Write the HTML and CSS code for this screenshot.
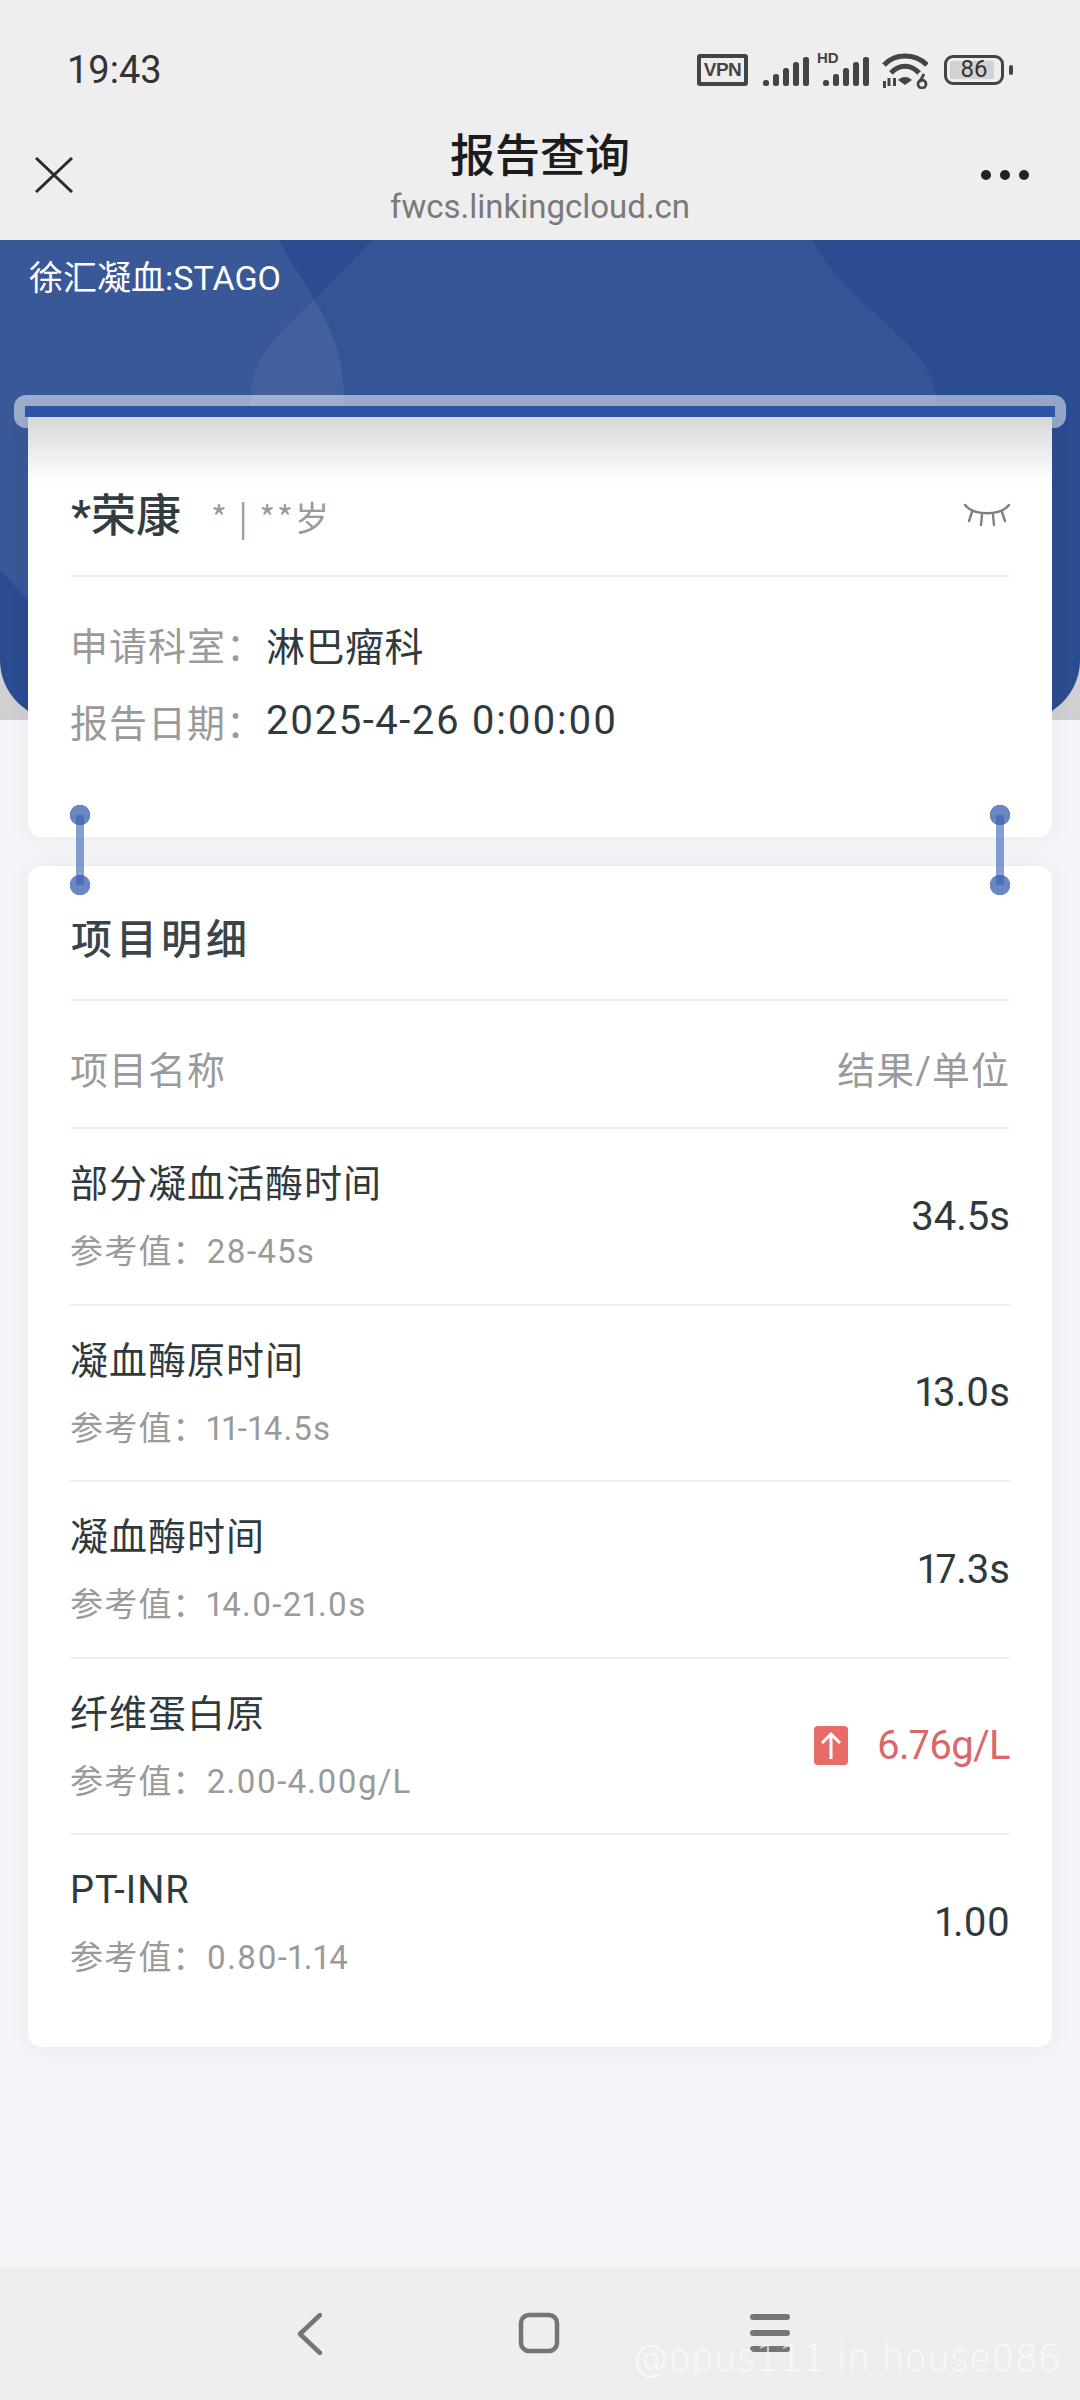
FILE: index.html
```html
<!DOCTYPE html>
<html lang="zh">
<head>
<meta charset="utf-8">
<title>报告查询</title>
<link rel="stylesheet" href="styles.css">
</head>
<body>
<div class="page">
  <header class="top">
    <div class="status">
      <span class="time">19:43</span>
      <div class="status-icons">
        <span class="vpn">VPN</span>
        <svg class="sig" width="46" height="30" viewBox="0 0 46 30"><g fill="#444"><rect x="0" y="23" width="6" height="6" rx="2.5"/><rect x="10" y="17" width="6" height="12" rx="2.5"/><rect x="20" y="11" width="6" height="18" rx="2.5"/><rect x="30" y="5" width="6" height="24" rx="2.5"/><rect x="40" y="0" width="6" height="29" rx="2.5"/></g></svg>
        <div class="sig-hd">
          <span class="hd">HD</span>
          <svg width="46" height="30" viewBox="0 0 46 30"><g fill="#444"><rect x="0" y="23" width="6" height="6" rx="2.5"/><rect x="10" y="17" width="6" height="12" rx="2.5"/><rect x="20" y="11" width="6" height="18" rx="2.5"/><rect x="30" y="5" width="6" height="24" rx="2.5"/><rect x="40" y="0" width="6" height="29" rx="2.5"/></g></svg>
        </div>
        <svg class="wifi" width="46" height="36" viewBox="0 0 46 36"><g fill="none" stroke="#444" stroke-width="5"><path d="M2 12C13 0 33 0 45 12"/><path d="M9 20C17 11 29 11 37 20"/></g><path d="M16 27c4-4 10-4 14 0l-7 5z" fill="#444"/><g fill="#444"><rect x="1" y="28" width="3" height="7"/><rect x="5.500" y="25" width="3" height="8"/><rect x="11" y="25" width="3" height="8"/></g><circle cx="40" cy="31" r="4" fill="none" stroke="#444" stroke-width="2.800"/><path d="M42 21l-4.500 8" stroke="#444" stroke-width="2.800"/></svg>
        <div class="battery"><span class="level"></span><span class="pct">86</span></div>
        <span class="nub"></span>
      </div>
    </div>
    <div class="titlebar">
      <svg class="close" width="38" height="36" viewBox="0 0 38 36"><path d="M1 1L37 35M37 1L1 35" stroke="#2b2b2b" stroke-width="3" fill="none"/></svg>
      <div class="heading">
        <div class="title">报告查询</div>
        <div class="url">fwcs.linkingcloud.cn</div>
      </div>
      <div class="dots"><i></i><i></i><i></i></div>
    </div>
  </header>

  <section class="hero-wrap">
    <div class="hero">
      <svg class="blobs" width="1080" height="480" viewBox="0 0 1080 480">
        <path d="M0 0H279C305 50 344 90 344 155V480H120C70 410 30 360 0 330Z" fill="#fff" opacity=".07"/>
        <path d="M372 0H812C850 70 930 100 936 155V480H251V155C252 110 290 85 317 57Z" fill="#fff" opacity=".05"/>
      </svg>
      <div class="hero-text">徐汇凝血:STAGO</div>
    </div>
  </section>

  <main class="content">
    <div class="slot"><span class="slot-in"></span></div>
    <section class="card card-person">
      <div class="fade"></div>
      <div class="person">
        <div class="who"><span class="name">*荣康</span><span class="meta">* | **岁</span></div>
        <svg class="eye" width="46" height="24" viewBox="0 0 46 24"><g fill="none" stroke="#808080" stroke-width="2.400" stroke-linecap="round"><path d="M1 2C10 13 36 13 45 2"/><path d="M8 9L5 18M18 12L17 22M29 12L30 22M38 9L41 18"/></g></svg>
      </div>
      <div class="info">
        <div class="info-row"><span class="label">申请科室：</span><span class="value">淋巴瘤科</span></div>
        <div class="info-row"><span class="label">报告日期：</span><span class="value value-date">2025-4-26 0:00:00</span></div>
      </div>
    </section>

    <section class="card card-items">
      <span class="link link-l"></span>
      <span class="link link-r"></span>
      <h2 class="sec-title">项目明细</h2>
      <div class="thead"><span>项目名称</span><span>结果/单位</span></div>
      <div class="row">
        <div><div class="item">部分凝血活酶时间</div><div class="ref">参考值：28-45s</div></div>
        <div class="res">34.5s</div>
      </div>
      <div class="row">
        <div><div class="item">凝血酶原时间</div><div class="ref">参考值：11-14.5s</div></div>
        <div class="res">13.0s</div>
      </div>
      <div class="row">
        <div><div class="item">凝血酶时间</div><div class="ref">参考值：14.0-21.0s</div></div>
        <div class="res">17.3s</div>
      </div>
      <div class="row">
        <div><div class="item">纤维蛋白原</div><div class="ref">参考值：2.00-4.00g/L</div></div>
        <div class="res res-high">
          <svg class="up" width="34" height="39" viewBox="0 0 34 39"><rect width="34" height="39" rx="4" fill="#e96b68"/><path d="M17 33V9M8 17l9-9 9 9" fill="none" stroke="#fff" stroke-width="3"/></svg>
          <span class="high-val">6.76g/L</span>
        </div>
      </div>
      <div class="row">
        <div><div class="item">PT-INR</div><div class="ref">参考值：0.80-1.14</div></div>
        <div class="res">1.00</div>
      </div>
    </section>
  </main>

  <nav class="navbar">
    <svg class="nav-back" width="26" height="42" viewBox="0 0 26 42"><path d="M24 2L4 21l20 19" fill="none" stroke="#757575" stroke-width="4.500" stroke-linecap="round" stroke-linejoin="round"/></svg>
    <svg class="nav-home" width="42" height="42" viewBox="0 0 42 42"><rect x="3" y="3" width="36" height="36" rx="8" fill="none" stroke="#757575" stroke-width="4.500"/></svg>
    <div class="nav-menu"><i></i><i></i><i></i></div>
    <span class="watermark">@opus111 in house086</span>
  </nav>
</div>
</body>
</html>
```
FILE: styles.css
```css
* { box-sizing: border-box; }
html, body { margin: 0; padding: 0; }
body { font-family: Roboto, "Noto Sans CJK SC", sans-serif; font-variant-numeric: proportional-nums; color: #2f3a3e; background: #f4f5f8; }
.page { position: relative; width: 1080px; height: 2400px; display: flex; flex-direction: column; overflow: hidden; }

.top { height: 240px; background: #eeeeee; flex: none; }
.status { height: 100px; padding: 40px 67px 0 67px; display: flex; justify-content: space-between; align-items: center; }
.time { font: 400 38px/60px Roboto, sans-serif; color: #333; }
.status-icons { display: flex; align-items: center; position: relative; height: 40px; }
.vpn { width: 51px; height: 32px; border: 4px solid #444; border-radius: 3px; font: 700 19px/24px "Liberation Sans", sans-serif; color: #444; text-align: center; letter-spacing: -.5px; }
.sig { margin-left: 15px; margin-top: 4px; }
.sig-hd { position: relative; margin-left: 10px; width: 50px; height: 30px; margin-top: 4px; display: flex; justify-content: flex-end; }
.hd { position: absolute; left: -2px; top: -6px; font: 700 15px/14px "Liberation Sans", sans-serif; color: #444; }
.wifi { margin-left: 13px; margin-top: 2px; }
.battery { position: relative; width: 60px; height: 30px; margin-left: 16px; border: 3.5px solid #444; border-radius: 9px; }
.level { position: absolute; left: 3px; top: 3px; bottom: 3px; width: 44px; background: #d2d2d2; border-radius: 2px; }
.pct { position: absolute; inset: 0; text-align: center; font: 400 24px/23px Roboto, sans-serif; color: #333; }
.nub { width: 4px; height: 10px; margin-left: 5px; background: #444; border-radius: 2px; }

.titlebar { height: 140px; padding: 0 51px 0 35px; display: flex; justify-content: space-between; align-items: flex-start; position: relative; }
.close { margin-top: 57px; }
.dots { display: flex; gap: 9px; margin-top: 70px; }
.dots i { width: 10px; height: 10px; border-radius: 50%; background: #222; display: block; }
.heading { position: absolute; left: 0; right: 0; top: 23px; text-align: center; }
.title { font: 500 45px/60px "Noto Sans CJK SC", sans-serif; color: #1c1c1c; }
.url { font: 400 33px/44px Roboto, sans-serif; color: #7a7a7a; margin-top: 2px; }

.hero-wrap { height: 480px; background: linear-gradient(#eee, #cfcfd1); flex: none; }
.hero { position: relative; height: 480px; background: #2a4c90; border-radius: 0 0 60px 60px; overflow: hidden; }
.blobs { position: absolute; left: 0; top: 0; }
.hero-text { position: relative; padding: 16px 0 0 29px; font: 400 34px/44px Roboto, "Noto Sans CJK SC", sans-serif; color: #fff; }

.content { position: relative; flex: 1; padding: 0 28px; margin-top: -303px; }
.slot { position: absolute; left: 14px; right: 14px; top: -22px; height: 33px; background: rgba(255, 255, 255, .5); border-radius: 12px; }
.slot-in { position: absolute; left: 11px; right: 11px; top: 11px; height: 11px; background: #2e56a5; }

.card { position: relative; background: #fff; box-shadow: 0 0 24px rgba(40, 50, 80, .06); }
.card-person { height: 420px; border-radius: 0 0 14px 14px; padding: 0 42px; }
.fade { position: absolute; left: 0; right: 0; top: 0; height: 66px; background: linear-gradient(#d8d8d9, #fff); }
.person { position: relative; height: 160px; padding-top: 69px; padding-left: 1px; border-bottom: 2px solid #efefef; display: flex; justify-content: space-between; align-items: flex-start; }
.who { display: flex; align-items: center; height: 62px; }
.name { font: 500 45px/62px Roboto, "Noto Sans CJK SC", sans-serif; color: #333c40; }
.meta { margin-left: 30px; font: 400 34px/62px "Noto Sans CJK SC", sans-serif; letter-spacing: 2px; color: #9a9a9a; opacity: .99; }
.eye { margin-top: 17px; }
.info { padding-top: 28px; }
.info-row { display: flex; height: 77px; align-items: center; font-size: 38px; }
.label { width: 196px; color: #9a9a9a; letter-spacing: 1px; }
.value { font-size: 39px; color: #2f3a3e; letter-spacing: .5px; }
.value-date { font-size: 40px; letter-spacing: 1.5px; }

.card-items { height: 1181px; margin-top: 29px; border-radius: 14px; padding: 0 42px; }
.link { position: absolute; top: -51px; width: 20px; height: 70px; }
.link::before { content: ""; position: absolute; left: 6px; top: 0; width: 8px; height: 70px; background: rgba(60, 100, 180, .62); }
.link::after { content: ""; position: absolute; left: 0; top: -10px; width: 20px; height: 90px; background: radial-gradient(circle at 10px 10px, rgba(55, 95, 175, .75) 10px, transparent 10.5px), radial-gradient(circle at 10px 80px, rgba(55, 95, 175, .75) 10px, transparent 10.5px); }
.link-l { left: 42px; }
.link-r { right: 42px; }
.sec-title { margin: 0; height: 135px; padding: 43px 0 0 1px; border-bottom: 2px solid #efefef; font: 500 41px/54px "Noto Sans CJK SC", sans-serif; letter-spacing: 4px; color: #3a4448; }
.thead { height: 128px; padding-top: 6px; display: flex; justify-content: space-between; align-items: center; border-bottom: 2px solid #efefef; font-size: 38px; color: #9a9a9a; letter-spacing: 1px; }
.row { height: 176.5px; padding-top: 31px; display: flex; justify-content: space-between; border-bottom: 2px solid #efefef; }
.row:last-child { border-bottom: 0; }
.item { font-size: 38px; line-height: 48px; letter-spacing: 1px; color: #2f3a3e; }
.ref { margin-top: 22px; font-size: 33px; line-height: 44px; letter-spacing: 1.2px; color: #9a9a9a; }
.res { display: flex; align-items: center; height: 112px; font-size: 40px; color: #2f3a3e; }
.res-high { color: #d9686a; }
.high-val { letter-spacing: -.6px; }
.up { margin-right: 29px; }

.navbar { position: relative; height: 133px; flex: none; background: #eeeeee; }
.nav-back { position: absolute; left: 296px; top: 46px; }
.nav-home { position: absolute; left: 518px; top: 45px; }
.nav-menu { position: absolute; left: 750px; top: 47px; display: flex; flex-direction: column; gap: 10px; }
.nav-menu i { display: block; width: 40px; height: 6px; border-radius: 3px; background: #757575; }
.watermark { position: absolute; left: 632px; top: 68px; font: 200 36.400px/48px "DejaVu Sans", sans-serif; color: rgba(255, 255, 255, .7); white-space: nowrap; }
```
